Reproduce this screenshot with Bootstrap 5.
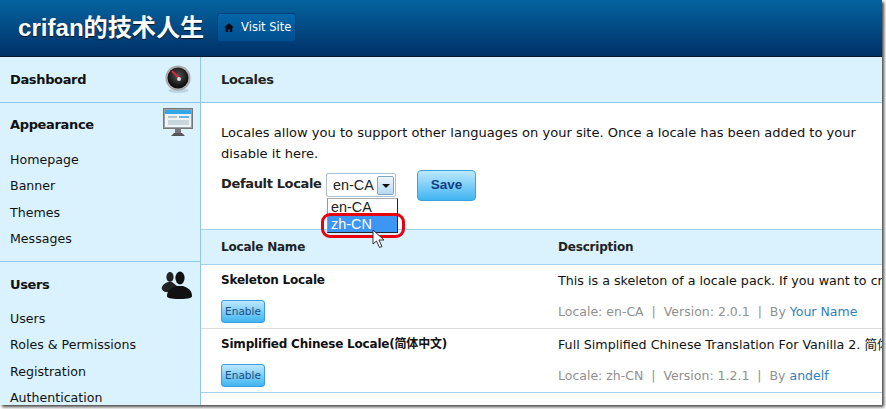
<!DOCTYPE html>
<html lang="en"><head><meta charset="utf-8"><title>Locales</title>
<link href="https://cdn.jsdelivr.net/npm/bootstrap@5.3.0/dist/css/bootstrap.min.css" rel="stylesheet">
<style>
html,body{margin:0;height:100%;background:#fff;overflow:hidden}
body{font-family:"DejaVu Sans","Noto Sans CJK SC",sans-serif;font-size:12.5px;color:#000}
.frame{width:882px;height:405px;overflow:hidden;box-shadow:2px 2px 3px #444;background:#fff}
.topbar{height:57px;background:linear-gradient(#04649f,#013068);border-bottom:1px solid #0a1a2c;padding-left:18px;gap:13px}
.brand{font-family:"Liberation Sans","Noto Sans CJK SC",sans-serif;font-weight:700;font-size:24.1px;color:#fff;text-shadow:0 1px 1px #012;white-space:nowrap}
.visit{height:29px;width:79px;margin-top:-1px;border:1px solid #023f7d;border-radius:3px;background:linear-gradient(#0466a8,#024f90);color:#fff;font-size:11.5px;gap:7px;padding-left:6px}
.mainrow{height:348px}
.side{width:201px;flex:none;background:#d9f2fe;border-right:1px solid #8ec8e6;color:#111}
.side-block{border-bottom:1px solid #8ec8e6;position:relative}
.side-head{font-weight:700;font-size:13px;letter-spacing:-.35px;color:#111;height:45px;padding:1px 10px 0}
.side-block svg{position:absolute}
.side-link{padding-left:10px;height:26.3px;line-height:26px;font-size:12.6px;white-space:nowrap}
.content{flex:1;min-width:0;position:relative;overflow:hidden}
.page-title{height:46px;background:#d9f2fe;border-bottom:1px solid #8ec8e6;padding:1px 0 0 20px;font-weight:700;font-size:13px;letter-spacing:-.3px;color:#222}
.intro{padding:19px 0 0 20px;line-height:21px;width:680px;height:74px;font-size:13.05px;white-space:nowrap;color:#111}
.form-line{height:52px;padding-left:20px;position:relative}
.lbl{font-weight:700;font-size:13px;letter-spacing:-.35px;color:#222;width:105px;white-space:nowrap;margin-top:-3px}
.fake-select{width:70px;height:24px;line-height:22px;border:1px solid #a9c3da;border-radius:2px;font-family:"Liberation Sans",sans-serif;font-size:14.4px;padding-left:6px;margin-top:-4px;position:relative;background:#fff;color:#222}
.arrowbox{position:absolute;right:1px;top:2px;width:17px;height:19px;border:1px solid #7fa6c9;border-radius:2px;background:linear-gradient(#eef6fc,#b5d8f3)}
.arrowbox i{position:absolute;left:4px;top:7px;border:4px solid transparent;border-top:4px solid #111;border-bottom:0}
.save-btn{width:59px;height:31px;margin-left:21px;margin-top:-7px;border:1px solid #3f9fdc;border-radius:4px;background:linear-gradient(#bce8fd,#41b5f1);color:#123f7f;font-family:"Liberation Sans",sans-serif;font-weight:700;font-size:13.5px;padding:0}
.pop{position:absolute;left:126px;top:141px;width:71px;height:35px;background:#fff;border:1px solid #222;border-left-color:#999;border-top-color:#aaa;font-family:"Liberation Sans",sans-serif;font-size:14.4px;z-index:2}
.pop div{height:17px;line-height:16px;padding-left:3px;color:#222}
.pop .sel{background:#3d95f4;color:#fff;height:16px}
.ring{position:absolute;left:120px;top:156px;width:84px;height:25px;border:3px solid #e8000f;border-radius:9px;z-index:3}
.cursor{position:absolute;left:171px;top:172px;z-index:4}
.locale-table{width:100%;table-layout:fixed;margin:0;border-collapse:collapse}
.locale-table th{height:35px;background:#d9f2fe;border-top:1px solid #a4d2ea;border-bottom:1px solid #a4d2ea;font-size:12px;letter-spacing:-.2px;color:#222;padding:0 0 0 20px}
.locale-table th:nth-child(1),.locale-table td:nth-child(1){width:337px}
.locale-table td{height:64px;border-bottom:1px solid #ddd;padding:6px 0 0 20px;vertical-align:top;white-space:nowrap;overflow:hidden;font-size:12.7px}
.locale-table tr:last-child td{border-bottom:1px solid #a4d2ea}
.name{font-weight:700;font-size:12px;letter-spacing:-.2px;color:#111;height:29px}
.desc{height:32px;color:#111}
.meta{color:#909090;font-size:12.5px}
.meta a{color:#2f80bd;text-decoration:none}
.en-btn{display:block;width:44px;height:23px;padding:0;border:1px solid #3a9fe0;border-radius:3px;background:linear-gradient(#bce8fd,#41b5f1);color:#1d4c7f;font-size:10.5px}
</style></head>
<body>
<div class="frame">
 <header class="topbar d-flex align-items-center">
  <div class="brand">crifan的技术人生</div>
  <a class="visit d-flex align-items-center text-decoration-none" href="#">
   <svg width="10" height="9" viewBox="0 0 12 11"><path d="M6 0 0 5.5h2V11h3V7.5h2V11h3V5.5h2z" fill="#0a0a14"/></svg>
   <span>Visit Site</span></a>
 </header>
 <div class="mainrow d-flex">
  <nav class="side">
   <div class="side-block">
    <div class="side-head d-flex align-items-center">Dashboard</div>
    <svg style="left:165px;top:8px" width="28" height="29" viewBox="0 0 28 29">
     <defs><radialGradient id="g1" cx=".5" cy=".4"><stop offset="0" stop-color="#555"/><stop offset="1" stop-color="#111"/></radialGradient></defs>
     <ellipse cx="13.5" cy="25.5" rx="10" ry="2.5" fill="#b9d4e2"/>
     <circle cx="13" cy="13" r="12.6" fill="#aaa"/><circle cx="13" cy="13" r="10.5" fill="url(#g1)"/>
     <path d="M7 6 14 13" stroke="#e0293a" stroke-width="2"/><circle cx="14" cy="14" r="2" fill="#ddd"/>
    </svg>
   </div>
   <div class="side-block" style="height:159px">
    <div class="side-head d-flex align-items-center" style="height:42px">Appearance</div>
    <svg style="left:163px;top:5px" width="31" height="29" viewBox="0 0 31 29">
     <rect x=".5" y=".5" width="29" height="20" fill="#9aa2a8" stroke="#777"/><rect x="2" y="2" width="26" height="17" fill="#eef3f6"/>
     <rect x="2" y="2" width="26" height="4" fill="#35a6e8"/><rect x="5" y="8" width="9" height="2" fill="#b9c4cc"/><rect x="16" y="8" width="10" height="2" fill="#64b7ea"/><rect x="5" y="12" width="21" height="5" fill="#c9d6de"/>
     <rect x="12" y="21" width="6" height="4" fill="#777"/><path d="M8 28 11 25h8l3 3z" fill="#555"/>
    </svg>
    <div style="margin-top:2px">
     <div class="side-link">Homepage</div><div class="side-link">Banner</div><div class="side-link">Themes</div><div class="side-link">Messages</div>
    </div>
   </div>
   <div style="position:relative">
    <div class="side-head d-flex align-items-center" style="height:44px">Users</div>
    <svg style="position:absolute;left:161px;top:9px" width="32" height="28" viewBox="0 0 32 28">
     <ellipse cx="9" cy="6" rx="3.6" ry="5" fill="#222"/><path d="M1 16c1-3 4-4 6-5h4l5 4v6H4c-2-1-4-3-3-5z" fill="#222"/>
     <ellipse cx="19" cy="7" rx="4.6" ry="6.5" fill="#111"/><path d="M6 25c0-6 4-8 10-10h6c5 2 9 4 9 10 0 2-3 3-12.5 3S6 27 6 25z" fill="#111"/>
    </svg>
    <div class="side-link">Users</div><div class="side-link">Roles &amp; Permissions</div><div class="side-link">Registration</div><div class="side-link">Authentication</div>
   </div>
  </nav>
  <main class="content">
   <div class="page-title d-flex align-items-center">Locales</div>
   <div class="intro">Locales allow you to support other languages on your site. Once a locale has been added to your<br>disable it here.</div>
   <div class="form-line d-flex align-items-start">
    <span class="lbl">Default Locale</span>
    <div class="fake-select">en-CA<span class="arrowbox"><i></i></span></div>
    <button class="save-btn" type="button">Save</button>
   </div>
   <div class="pop"><div>en-CA</div><div class="sel">zh-CN</div></div>
   <div class="ring"></div>
   <svg class="cursor" width="14" height="20" viewBox="0 0 14 20"><path d="M1 1v14l3.5-3 3 6.5 2.5-1-3-6.5h5z" fill="#fff" stroke="#333"/></svg>
   <table class="locale-table">
    <thead><tr><th>Locale Name</th><th>Description</th></tr></thead>
    <tbody>
     <tr><td><div class="name">Skeleton Locale</div><button class="en-btn" type="button">Enable</button></td>
      <td><div class="desc">This is a skeleton of a locale pack. If you want to create</div><div class="meta">Locale: en-CA&nbsp; | &nbsp;Version: 2.0.1&nbsp; | &nbsp;By <a href="#">Your Name</a></div></td></tr>
     <tr><td><div class="name">Simplified Chinese Locale(简体中文)</div><button class="en-btn" type="button">Enable</button></td>
      <td><div class="desc">Full Simplified Chinese Translation For Vanilla 2. 简体中文</div><div class="meta">Locale: zh-CN&nbsp; | &nbsp;Version: 1.2.1&nbsp; | &nbsp;By <a href="#">andelf</a></div></td></tr>
    </tbody>
   </table>
  </main>
 </div>
</div>
<script src="https://cdn.jsdelivr.net/npm/bootstrap@5.3.0/dist/js/bootstrap.bundle.min.js"></script>
</body></html>
